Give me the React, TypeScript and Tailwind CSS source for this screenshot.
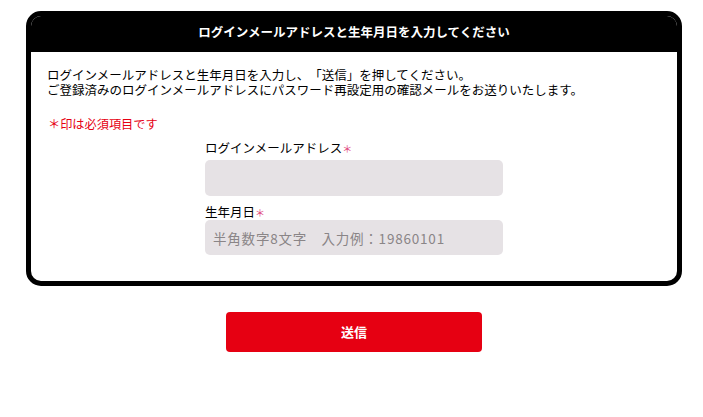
import React from "react";

const font = { fontFamily: '"Noto Sans CJK JP", "Noto Sans", sans-serif' };

const App: React.FC = () => {
  return (
    <div
      className="min-h-[417px] w-[703px] bg-white text-black [text-spacing-trim:space-all]"
      style={font}
    >
      <div className="pt-[11px] pl-[26px]">
        {/* Form Box */}
        <div className="w-[656px] rounded-[15px] border-[5px] border-black overflow-hidden">
          <div className="flex h-[36px] items-center justify-center bg-black pb-[4px] text-[12.5px] font-bold text-white">
            ログインメールアドレスと生年月日を入力してください
          </div>
          <div className="px-[16px] pt-[15px] pb-[26px]">
            <p className="text-[12.5px] leading-[15px]">
              ログインメールアドレスと生年月日を入力し、「送信」を押してください。
              <br />
              ご登録済みのログインメールアドレスにパスワード再設定用の確認メールをお送りいたします。
            </p>
            <p className="mt-[20px] pl-[1px] text-[12.2px] leading-[15px] text-[#e60012]">
              ＊印は必須項目です
            </p>
            <div className="mx-auto mt-[8px] w-[298px]">
              <label className="block text-[12.5px] leading-[15px]">
                ログインメールアドレス
                <span className="text-[10px] text-[#e0457b]">＊</span>
              </label>
              <input
                type="text"
                className="mt-[3.5px] block h-[36px] w-full rounded-[5px] bg-[#e6e2e5] px-[8px] text-[13px] outline-none"
              />
              <label className="mt-[8.5px] block text-[12.5px] leading-[15px]">
                生年月日
                <span className="text-[10px] text-[#e0457b]">＊</span>
              </label>
              <input
                type="text"
                placeholder="半角数字8文字　入力例：19860101"
                className="block h-[35px] w-full rounded-[5px] bg-[#e6e2e5] px-[8px] text-[13.5px] tracking-[0.8px] outline-none placeholder:text-[#8a8587]"
              />
            </div>
          </div>
        </div>

        {/* Submit */}
        <div className="flex w-[656px] justify-center pt-[26px]">
          <button className="h-[40px] w-[256px] rounded-[4px] bg-[#e60012] text-[13px] font-bold text-white">
            送信
          </button>
        </div>
      </div>
    </div>
  );
};

export default App;
